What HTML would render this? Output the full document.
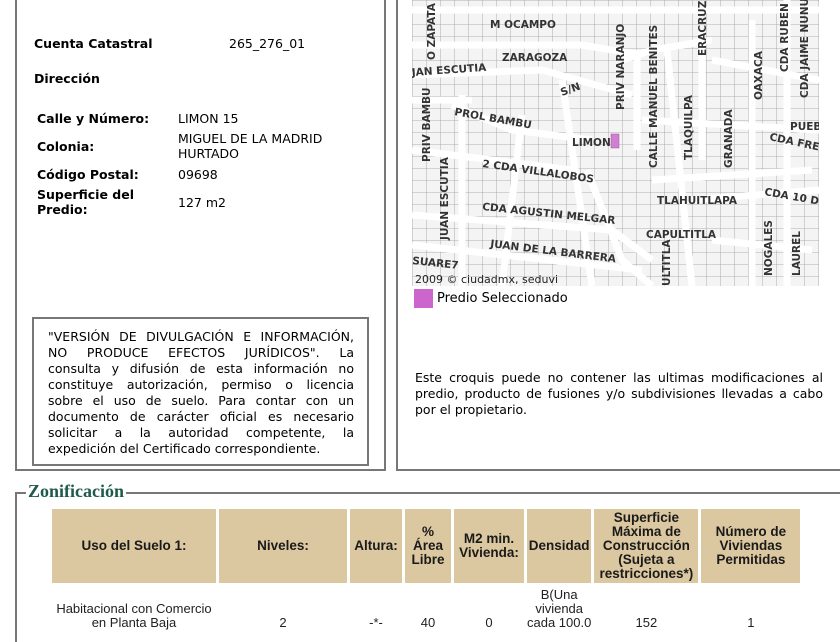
<!DOCTYPE html>
<html><head><meta charset="utf-8"><style>
*{margin:0;padding:0;box-sizing:border-box}
body{width:840px;height:630px;overflow:hidden;background:#fff;font-family:"DejaVu Sans","Liberation Sans",sans-serif;font-size:12.5px;color:#000;position:relative}
.abs{position:absolute}
.b{font-weight:bold}
.box{position:absolute;border:2px solid #777;border-top:none}
.jl div{text-align:justify;text-align-last:justify;white-space:nowrap}
.jl div.last{text-align-last:left}
th,td{font-family:"Liberation Sans Narrow","Liberation Sans",sans-serif}
table{border-collapse:separate;border-spacing:3px}
th{background:#dcc8a0;font-size:13.5px;font-weight:bold;color:#1a1a1a;text-align:center;vertical-align:middle;line-height:14px}
td{font-size:13px;text-align:center;color:#222;vertical-align:bottom;line-height:14px;white-space:nowrap}
</style></head><body>
<div class="box" style="left:15px;top:-2px;width:371px;height:473px"></div>
<div class="box" style="left:396px;top:-2px;width:446px;height:473px"></div>

<div class="abs b" style="left:34px;top:36px">Cuenta Catastral</div>
<div class="abs" style="left:229px;top:36px">265_276_01</div>
<div class="abs b" style="left:34px;top:71px">Dirección</div>
<div class="abs b" style="left:37px;top:111px">Calle y Número:</div>
<div class="abs" style="left:178px;top:111px">LIMON 15</div>
<div class="abs b" style="left:37px;top:139px">Colonia:</div>
<div class="abs" style="left:178px;top:131px;line-height:15px">MIGUEL DE LA MADRID<br>HURTADO</div>
<div class="abs b" style="left:37px;top:167px">Código Postal:</div>
<div class="abs" style="left:178px;top:167px">09698</div>
<div class="abs b" style="left:37px;top:187px;line-height:15px">Superficie del<br>Predio:</div>
<div class="abs" style="left:178px;top:195px">127 m2</div>

<div class="abs" style="left:32px;top:317px;width:337px;height:149px;border:2px solid #777"></div>
<div class="abs jl" style="left:48px;top:329px;width:306px;line-height:16px;font-size:12.5px">
<div>"VERSIÓN DE DIVULGACIÓN E INFORMACIÓN,</div>
<div>NO PRODUCE EFECTOS JURÍDICOS". La</div>
<div>consulta y difusión de esta información no</div>
<div>constituye autorización, permiso o licencia</div>
<div>sobre el uso de suelo. Para contar con un</div>
<div>documento de carácter oficial es necesario</div>
<div>solicitar a la autoridad competente, la</div>
<div class="last">expedición del Certificado correspondiente.</div>
</div>

<svg class="abs" style="left:412px;top:0" width="407" height="286" viewBox="0 0 407 286">
<defs><pattern id="blk" width="14" height="12" patternUnits="userSpaceOnUse"><rect width="14" height="12" fill="#f4f4f4"/><path d="M0 0H14M0 0V12" stroke="#9a9a9a" stroke-width="0.8"/></pattern></defs>
<rect width="407" height="286" fill="url(#blk)"/>
<g stroke="#fff" stroke-width="7" fill="none">
<path d="M0 10H407M0 45H170L230 55M0 75L130 70L220 95M0 100H60M40 105L100 130L180 140M50 95V286M110 115L90 286M0 150L160 170M0 215L200 230L240 260M0 245L230 270M150 80L180 286M175 170L210 260L240 286M225 50V150M255 50L280 286M210 60L240 50L300 40M290 30V160M340 20V286M375 0V286M280 200L407 190M240 180L400 170M230 120L407 130M300 60L407 80M300 240L400 250"/>
</g>
<rect x="199" y="134" width="8" height="14" fill="#d080d0" stroke="#a050a0" stroke-width="0.5"/>
<g font-family="DejaVu Sans,sans-serif" font-size="10.5" font-weight="bold" fill="#333">
<text x="78" y="28">M OCAMPO</text>
<text x="90" y="61">ZARAGOZA</text>
<text x="0" y="76" transform="rotate(-4 0 76)">JAN ESCUTIA</text>
<text x="150" y="96" transform="rotate(-20 150 96)">S/N</text>
<text x="42" y="115" transform="rotate(10 42 115)">PROL BAMBU</text>
<text x="160" y="146">LIMON</text>
<text x="70" y="167" transform="rotate(8 70 167)">2 CDA VILLALOBOS</text>
<text x="70" y="210" transform="rotate(6 70 210)">CDA AGUSTIN MELGAR</text>
<text x="78" y="247" transform="rotate(7 78 247)">JUAN DE LA BARRERA</text>
<text x="0" y="264" transform="rotate(6 0 264)">SUARE7</text>
<text x="245" y="204">TLAHUITLAPA</text>
<text x="234" y="238">CAPULTITLA</text>
<text x="357" y="140" transform="rotate(12 357 140)">CDA FRESNOS</text>
<text x="378" y="130">PUEB</text>
<text x="352" y="195" transform="rotate(10 352 195)">CDA 10 D</text>
<g transform="rotate(-90)">
<text x="-110" y="212">PRIV NARANJO</text>
<text x="-168" y="245">CALLE MANUEL BENITES</text>
<text x="-160" y="280">TLAQUILPA</text>
<text x="-168" y="320">GRANADA</text>
<text x="-100" y="350">OAXACA</text>
<text x="-72" y="376">CDA RUBEN</text>
<text x="-98" y="396">CDA JAIME NUNU</text>
<text x="-56" y="294">ERACRUZ</text>
<text x="-60" y="23">O ZAPATA</text>
<text x="-162" y="18">PRIV BAMBU</text>
<text x="-240" y="36">JUAN ESCUTIA</text>
<text x="-276" y="360">NOGALES</text>
<text x="-276" y="388">LAUREL</text>
<text x="-286" y="258">ULTITLA</text>
</g>
</g>
<text x="3" y="283" font-family="DejaVu Sans,sans-serif" font-size="11" fill="#222">2009 © ciudadmx, seduvi</text>
</svg>
<div class="abs" style="left:414px;top:289px;width:19px;height:19px;background:#cc66cc"></div>
<div class="abs" style="left:437px;top:291px;font-size:13px">Predio Seleccionado</div>
<div class="abs" style="left:415px;top:370px;width:408px;line-height:16px;font-size:12.5px;text-align:justify">Este croquis puede no contener las ultimas modificaciones al predio, producto de fusiones y/o subdivisiones llevadas a cabo por el propietario.</div>

<div class="abs" style="left:15px;top:492px;width:825px;height:150px;border:2px solid #777;border-right:none;border-bottom:none"></div>
<div class="abs" style="left:26px;top:481px;background:#fff;padding:0 2px;font-family:'Liberation Serif',serif;font-weight:bold;font-size:18px;color:#1e5a4a">Zonificación</div>

<table class="abs" style="left:49px;top:506px">
<tr style="height:74px">
<th style="width:164px">Uso del Suelo 1:</th>
<th style="width:128px">Niveles:</th>
<th style="width:52px">Altura:</th>
<th style="width:46px">%<br>Área<br>Libre</th>
<th style="width:70px">M2 min.<br>Vivienda:</th>
<th style="width:64px">Densidad</th>
<th style="width:104px">Superficie<br>Máxima de<br>Construcción<br>(Sujeta a<br>restricciones*)</th>
<th style="width:99px">Número de<br>Viviendas<br>Permitidas</th>
</tr>
<tr style="height:44px">
<td>Habitacional con Comercio<br>en Planta Baja</td><td>2</td><td>-*-</td><td>40</td><td>0</td><td>B(Una<br>vivienda<br>cada 100.0</td><td>152</td><td>1</td>
</tr>
</table>
</body></html>
